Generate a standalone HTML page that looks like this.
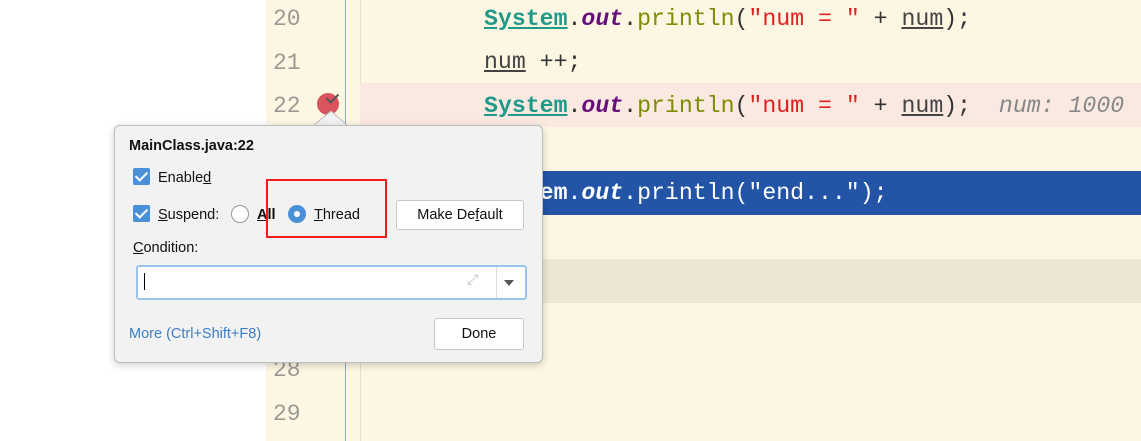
<!DOCTYPE html><html><head><style>
body{margin:0;width:1141px;height:441px;overflow:hidden;position:relative;background:#fff;font-family:"Liberation Sans",sans-serif}
.ed{position:absolute;left:266px;top:0;width:875px;height:441px;background:#fdf6e3}
.band{position:absolute;left:94px;right:0}
.num{position:absolute;left:7px;width:40px;font:23px "Liberation Mono",monospace;color:#9a9a93}
.code{position:absolute;left:218px;font:23.2px "Liberation Mono",monospace;color:#333;white-space:pre}
.S{color:#1f9a8a;font-weight:bold;text-decoration:underline}
.o{color:#660e7a;font-weight:bold;font-style:italic}
.p{color:#7d8d00}.s{color:#e02020}.u{text-decoration:underline;color:#444}
.pop{position:absolute;left:114px;top:125px;width:427px;height:236px;background:#f2f2f2;border:1px solid #bdbdbd;border-radius:6px;box-shadow:0 2px 8px rgba(0,0,0,.2);font-size:14.5px;color:#111}
.cb{position:absolute;width:17px;height:17px;background:#4a90d9;border-radius:2px}
.cb:after{content:"";position:absolute;left:5px;top:1px;width:5px;height:10px;border:solid #fff;border-width:0 2px 2px 0;transform:rotate(45deg)}
.t{position:absolute;white-space:nowrap}
.btn{position:absolute;background:#fff;border:1px solid #c8c8c8;border-radius:3px;text-align:center}
</style></head><body>
<div class="ed">
<div style="position:absolute;left:79px;top:0;width:1px;height:441px;background:#8aa6d2"></div>
<div style="position:absolute;left:94px;top:0;width:1px;height:441px;background:#e8dfc8"></div>
<div class="band" style="top:83px;height:44px;background:#f9e9e1"></div>
<div class="band" style="top:171px;height:44px;background:#2354a6;left:94px"></div>
<div class="band" style="top:259px;height:44px;background:#eee6d4"></div>
<div class="num" style="top:6px">20</div>
<div class="num" style="top:50px">21</div>
<div class="num" style="top:93px">22</div>
<div class="num" style="top:357px">28</div>
<div class="num" style="top:401px">29</div>
<div style="position:absolute;left:51px;top:93px;width:22px;height:22px;border-radius:50%;background:#d9545c"></div>
<div style="position:absolute;left:63px;top:91px;width:5px;height:10px;border:solid #555;border-width:0 2px 2px 0;transform:rotate(45deg)"></div>
<div class="code" style="top:6px"><span class="S">System</span>.<span class="o">out</span>.<span class="p">println</span>(<span class="s">"num = "</span> + <span class="u">num</span>);</div>
<div class="code" style="top:49px"><span class="u">num</span> ++;</div>
<div class="code" style="top:93px"><span class="S">System</span>.<span class="o">out</span>.<span class="p">println</span>(<span class="s">"num = "</span> + <span class="u">num</span>);  <span style="color:#888;font-style:italic">num: 1000</span></div>
<div class="code" style="top:180px;color:#fff"><span style="font-weight:bold">System</span>.<span style="font-weight:bold;font-style:italic">out</span>.println("end...");</div>
</div>
<svg style="position:absolute;left:313px;top:110px" width="36" height="17"><path d="M0 16 L18 1 L35 16" fill="#f2f2f2" stroke="#bdbdbd"/></svg>
<div class="pop">
<div style="position:absolute;left:198px;top:1px;width:34px;height:4px;background:#f2f2f2"></div>
<div class="t" style="left:14px;top:12px;font-weight:bold">MainClass.java:22</div>
<div class="cb" style="left:18px;top:42px"></div><div class="t" style="left:43px;top:44px">Enable<u>d</u></div>
<div class="cb" style="left:18px;top:79px"></div><div class="t" style="left:43px;top:81px"><u>S</u>uspend:</div>
<div style="position:absolute;left:116px;top:79px;width:16px;height:16px;border-radius:50%;background:#fff;border:1px solid #999"></div>
<div class="t" style="left:142px;top:81px;font-weight:bold"><u>A</u>ll</div>
<div style="position:absolute;left:173px;top:79px;width:18px;height:18px;border-radius:50%;background:#4a90d9"></div>
<div style="position:absolute;left:179px;top:85px;width:6px;height:6px;border-radius:50%;background:#fff"></div>
<div class="t" style="left:199px;top:81px"><u>T</u>hread</div>
<div class="btn" style="left:281px;top:74px;width:126px;height:28px;line-height:28px">Make De<u>f</u>ault</div>
<div class="t" style="left:18px;top:114px"><u>C</u>ondition:</div>
<div style="position:absolute;left:21px;top:139px;width:387px;height:31px;background:#fff;border:2px solid #9cc3ec;border-radius:3px"></div>
<div style="position:absolute;left:381px;top:141px;width:1px;height:31px;background:#ddd"></div>
<div style="position:absolute;left:29px;top:147px;width:1px;height:17px;background:#000"></div>
<div style="position:absolute;left:389px;top:154px;border:5px solid transparent;border-top:6px solid #555"></div>
<div class="t" style="left:352px;top:145px;color:#bbb;font-size:14px">⤢</div>
<div class="t" style="left:14px;top:200px;color:#3c7fc4">More (Ctrl+Shift+F8)</div>
<div class="btn" style="left:319px;top:192px;width:88px;height:30px;line-height:30px">Done</div>
</div>
<div style="position:absolute;left:266px;top:179px;width:121px;height:59px;border:2px solid #f21a1a;box-sizing:border-box"></div>
</body></html>
